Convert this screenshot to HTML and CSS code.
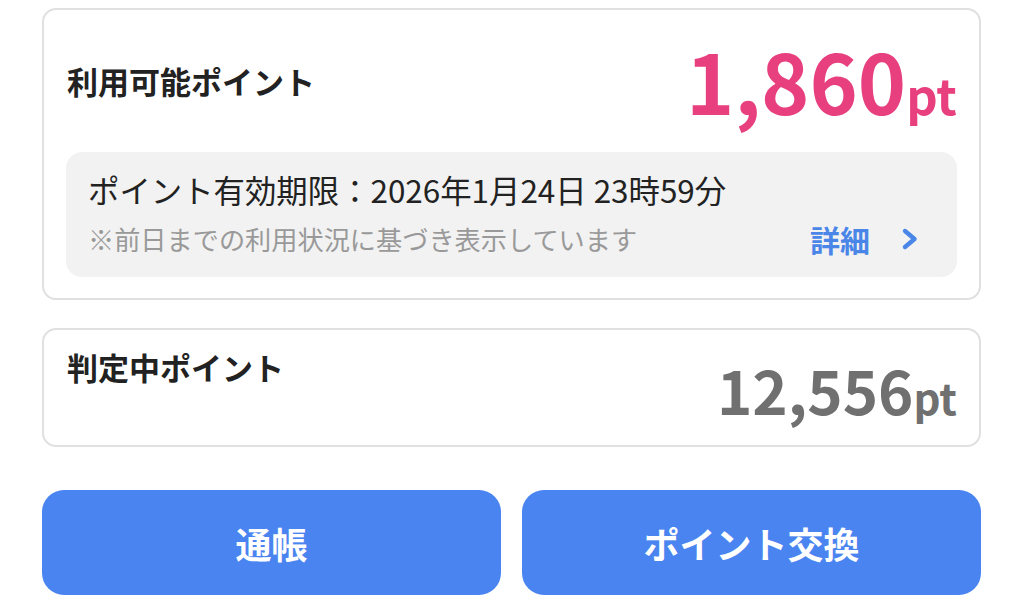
FILE: index.html
```html
<!DOCTYPE html>
<html lang="ja">
<head>
<meta charset="utf-8">
<link rel="stylesheet" href="styles.css">
</head>
<body>
<div class="page">
  <section class="card card-main">
    <div class="head">
      <h2 class="title">利用可能ポイント</h2>
      <div class="amount amount-pink">1,860<span class="unit">pt</span></div>
    </div>
    <div class="info">
      <div class="expire">ポイント有効期限：2026年1月24日 23時59分</div>
      <div class="info-row">
        <div class="note">※前日までの利用状況に基づき表示しています</div>
        <a class="detail">詳細<svg class="chev" width="18" height="24" viewBox="0 0 18 24"><path d="M4 4 L13.5 12 L4 20" fill="none" stroke="#4a86e8" stroke-width="4.4" stroke-linecap="round" stroke-linejoin="round"/></svg></a>
      </div>
    </div>
  </section>
  <section class="card card-pending">
    <h2 class="title">判定中ポイント</h2>
    <div class="amount amount-gray">12,556<span class="unit unit-sm">pt</span></div>
  </section>
  <div class="buttons">
    <button class="btn">通帳</button>
    <button class="btn">ポイント交換</button>
  </div>
</div>
</body>
</html>
```

FILE: styles.css
```css
* { box-sizing: border-box; }
html, body { margin: 0; padding: 0; background: #fff; }
body { font-family: "Noto Sans CJK JP", "Noto Sans", sans-serif; color: #222; }
.page { padding: 8px 43px 0 42px; }
.card {
  border: 2px solid #e0e0e0;
  border-radius: 14px;
  background: #fff;
}
.card-main { height: 292px; padding: 0 22px 21px 22px; display: flex; flex-direction: column; }
.head { height: 142px; display: flex; justify-content: space-between; align-items: center; padding-left: 1px; }
.title { margin: 0; font-size: 31px; font-weight: 700; line-height: 44px; color: #222; }
.amount { font-weight: 700; line-height: 1; white-space: nowrap; }
.amount-pink { color: #e8407f; font-size: 82px; margin-bottom: 2px; }
.unit { font-size: 49px; }
.amount-gray { color: #707070; font-size: 60px; align-self: flex-end; }
.unit-sm { font-size: 42px; }
.info {
  flex: 1;
  background: #f2f2f2;
  border-radius: 16px;
  padding: 17px 38px 0 22px;
}
.expire { font-size: 31.4px; line-height: 42px; color: #222; }
.info-row { display: flex; justify-content: space-between; align-items: center; margin-top: 10px; height: 36px; }
.note { font-size: 26.2px; line-height: 36px; color: #999; }
.detail { display: flex; align-items: center; gap: 31px; color: #4a86e8; font-size: 30px; font-weight: 700; line-height: 36px; }
.chev { display: block; }
.card-pending {
  margin-top: 28px;
  height: 119px;
  padding: 15px 22px 26px 23px;
  display: flex;
  justify-content: space-between;
}
.card-pending .title { align-self: flex-start; }
.buttons { display: flex; gap: 21px; margin-top: 43px; }
.btn {
  flex: 1;
  height: 105px;
  border: none;
  border-radius: 22px;
  background: #4a84f0;
  color: #fff;
  font-family: "Noto Sans CJK JP", "Noto Sans", sans-serif;
  font-size: 36px;
  font-weight: 700;
  padding: 0;
}
```
